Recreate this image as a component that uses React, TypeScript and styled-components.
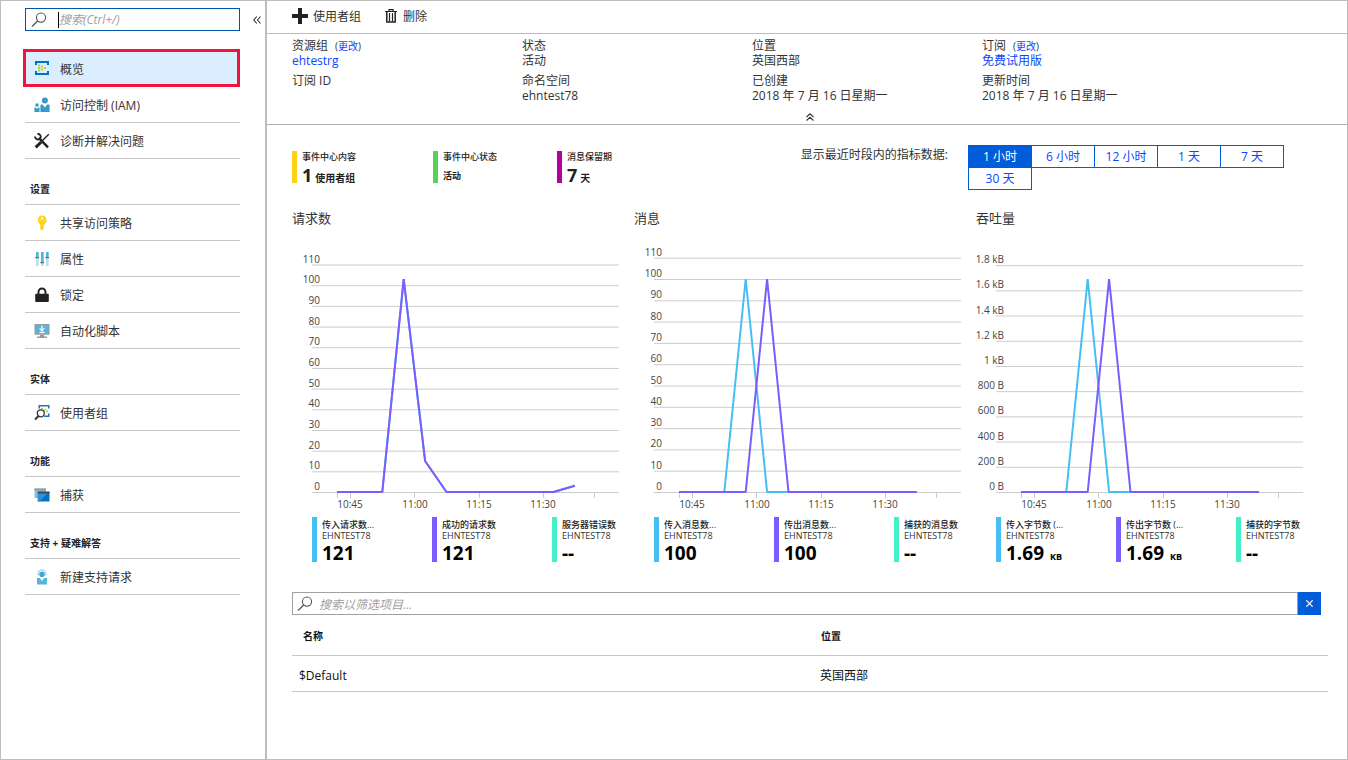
import React, { useState } from "react";
import styled, { createGlobalStyle, css } from "styled-components";

const GlobalStyle = createGlobalStyle`
  *, *::before, *::after { box-sizing: border-box; }
  body {
    margin: 0;
    background: #fff;
    color: #333;
    font: 12px/15px "Open Sans", "Noto Sans CJK SC", sans-serif;
  }
  button, input { font: inherit; color: inherit; }
  button { cursor: pointer; border: 0; padding: 0; background: none; }
  svg { display: block; flex: none; }
`;

const LINK = "#0a46ff";
const ACCENT = "#015cda";
const SKY = "#47bdf5";
const VIOLET = "#7b5cff";
const MINT = "#43f0c8";

/* ---------- page frame ---------- */

const Frame = styled.div`
  display: flex;
  min-height: 100vh;
  border: 1px solid #bdbdbd;
`;

const Sidebar = styled.aside`
  flex: none;
  width: 266px;
  border-right: 2px solid #bdbdbd;
  padding: 7px 0 24px 24px;
`;

const Main = styled.main`
  flex: 1;
  min-width: 0;
`;

/* ---------- sidebar ---------- */

const SearchRow = styled.div`
  display: flex;
  height: 23px;
`;

const SearchBox = styled.label`
  flex: 1;
  min-width: 0;
  display: flex;
  align-items: center;
  padding-left: 5px;
  border: 1px solid #0055aa;
`;

const Caret = styled.span`
  width: 1px;
  height: 16px;
  margin-left: 11px;
  background: #000;
`;

const TextInput = styled.input`
  flex: 1;
  min-width: 0;
  height: 21px;
  padding: 0;
  border: 0;
  outline: 0;
  background: transparent;
  &::placeholder {
    color: #a0a0a0;
    font-style: italic;
    opacity: 1;
  }
`;

const CollapseButton = styled.button`
  width: 25px;
  display: grid;
  place-items: center;
  padding-left: 8px;
`;

const Nav = styled.nav`
  margin: 18px 25px 0 0;
`;

const NavList = styled.ul`
  list-style: none;
  margin: 0;
  padding: 0;
`;

const NavHeading = styled.h2`
  margin: 0;
  height: 46px;
  padding: 15px 0 0 5px;
  border-bottom: 1px solid #c8c8c8;
  color: #222;
  font-size: 10px;
  line-height: 30px;
  font-weight: 700;
`;

const NavLink = styled.a<{ $active?: boolean }>`
  display: flex;
  align-items: center;
  gap: 10px;
  height: 36px;
  padding: 0 0 0 9px;
  border-bottom: 1px solid #c8c8c8;
  color: #333;
  text-decoration: none;
  span { padding-top: 2px; }
  ${(p) =>
    p.$active &&
    css`
      height: 38px;
      margin-left: -2px;
      padding-left: 8px;
      border: 3px solid #f0143c;
      background: #dbeeff;
    `}
`;

/* ---------- toolbar and essentials ---------- */

const Toolbar = styled.div`
  display: flex;
  align-items: center;
  gap: 24px;
  height: 33px;
  padding: 0 19px 3px 25px;
  border-bottom: 1px solid #bdbdbd;
`;

const Command = styled.button<{ $gap: number }>`
  display: flex;
  align-items: center;
  gap: ${(p) => p.$gap}px;
  span { padding-top: 2px; }
`;

const Essentials = styled.section`
  height: 91px;
  padding: 4px 19px 0 25px;
  border-bottom: 1px solid #b0b0b0;
`;

const Facts = styled.dl`
  display: grid;
  grid-template-columns: repeat(4, 230px);
  row-gap: 5px;
  margin: 0;
`;

const Fact = styled.div`
  height: 30px;
  dt, dd { margin: 0; height: 15px; white-space: nowrap; }
`;

const Link = styled.a`
  color: ${LINK};
  text-decoration: none;
`;

const Change = styled.span`
  margin-left: 7px;
  font-size: 10px;
`;

const FoldButton = styled.button`
  display: block;
  margin: 0 auto;
  padding: 10px 6px 3px;
`;

/* ---------- metrics ---------- */

const Content = styled.div`
  padding: 20px 19px 24px 25px;
`;

const Overview = styled.div`
  display: flex;
  justify-content: space-between;
  padding-right: 44px;
`;

const Tiles = styled.div`
  display: grid;
  grid-template-columns: 141px 124px auto;
  margin-top: 6px;
`;

const Tile = styled.div<{ $color: string }>`
  height: 32px;
  padding-left: 5px;
  border-left: 5px solid ${(p) => p.$color};
  color: #222;
  white-space: nowrap;
`;

const TileTitle = styled.div`
  font-size: 9px;
  line-height: 12px;
  font-weight: 500;
`;

const TileValue = styled.div`
  display: flex;
  align-items: baseline;
  gap: 3px;
  font-size: 10px;
  line-height: 24px;
  font-weight: 700;
  strong { font-size: 18px; font-weight: 700; }
`;

const TileState = styled.div`
  font-size: 9px;
  line-height: 26px;
  font-weight: 700;
`;

const RangePicker = styled.div`
  display: flex;
  gap: 20px;
  line-height: 20px;
`;

const Ranges = styled.div`
  display: flex;
  flex-wrap: wrap;
  width: 316px;
`;

const RangeButton = styled.button<{ $on: boolean }>`
  width: 64px;
  height: 23px;
  margin: 0 -1px -1px 0;
  border: 1px solid ${ACCENT};
  background: ${(p) => (p.$on ? ACCENT : "#fff")};
  color: ${(p) => (p.$on ? "#fff" : LINK)};
`;

const Charts = styled.div`
  display: grid;
  grid-template-columns: repeat(3, 1fr);
  margin-top: 19px;
  padding-right: 10px;
`;

const ChartTitle = styled.h3`
  margin: 0 0 12px;
  font-size: 13px;
  line-height: 20px;
  font-weight: 400;
`;

const Plot = styled.svg`
  width: 100%;
  height: auto;
  text {
    font-size: 10px;
    fill: #444;
  }
`;

const Legend = styled.div`
  display: grid;
  grid-template-columns: 120px 120px 1fr;
  margin-top: 5px;
  padding-left: 20px;
`;

const LegendItem = styled.div<{ $color: string }>`
  height: 45px;
  padding: 2px 0 0 5px;
  border-left: 5px solid ${(p) => p.$color};
  font-size: 9px;
  line-height: 11px;
  white-space: nowrap;
`;

const LegendName = styled.div`
  color: #222;
  font-weight: 500;
`;

const LegendValue = styled.div`
  display: flex;
  align-items: baseline;
  gap: 6px;
  color: #000;
  font-weight: 700;
  line-height: 25px;
  strong { font-size: 19px; font-weight: 700; }
`;

/* ---------- consumer group table ---------- */

const FilterRow = styled.div`
  display: flex;
  height: 23px;
  margin: 30px 7px 0 0;
`;

const FilterBox = styled.label`
  flex: 1;
  display: flex;
  align-items: center;
  gap: 6px;
  padding-left: 4px;
  border: 1px solid #a0a0a0;
  input { padding-top: 2px; }
`;

const ClearButton = styled.button`
  width: 23px;
  display: grid;
  place-items: center;
  background: ${ACCENT};
`;

const Table = styled.table`
  width: 100%;
  table-layout: fixed;
  border-collapse: separate;
  border-spacing: 0;
  th, td {
    padding: 2px 0 0 10px;
    border-bottom: 1px solid #c8c8c8;
    text-align: left;
    color: #111;
  }
  th { height: 41px; padding-left: 11px; font-size: 10px; font-weight: 700; }
  td { height: 36px; padding-top: 3px; }
  td:first-child { padding-left: 7px; }
`;

/* ---------- icons ---------- */

const SearchIcon = () => (
  <svg width="16" height="16" viewBox="0 0 16 16" fill="none" stroke="#555" strokeWidth="1.1">
    <circle cx="10" cy="5.600" r="4.600" />
    <path d="M6.700 9 1 14.600" strokeWidth="1.400" />
  </svg>
);

const HubIcon = () => (
  <svg width="16" height="16" viewBox="0 0 16 16">
    <path fill="#0072c6" d="M1 1h14v4h-2V3H3v2H1zM1 15h14v-4h-2v2H3v-2H1z" />
    <path fill="#b8d432" d="M4 4.400h2v2H4zM4 7h2v2H4zM4 9.600h2v2H4zM6.800 5.600h2v2h-2zM6.800 8.400h2v2h-2zM9.800 7h2.200v2H9.800z" />
  </svg>
);

const PeopleIcon = () => (
  <svg width="16" height="16" viewBox="0 0 16 16" fill="#3999c6">
    <circle cx="10.9" cy="3.6" r="3" />
    <path d="M6.4 15V8.4Q6.4 7.4 7.4 7.4H8.6L10.9 10.6 13.2 7.4H14.6Q15.6 7.4 15.6 8.4V15z" />
    <circle cx="3" cy="8" r="1.8" />
    <path d="M.4 15v-4q0-.6.6-.6h.8L3 12l1.200-1.600h.8q.6 0 .6.6v4z" />
  </svg>
);

const ToolsIcon = () => (
  <svg width="16" height="16" viewBox="0 0 16 16" fill="none" stroke="#222">
    <path d="M5 5.200 14 14.400" strokeWidth="2.400" />
    <path d="M3.400.9A2.800 2.800 0 1 1 1.100 3.600" strokeWidth="1.900" />
    <path d="M14.800 1.200 8.500 7.500" strokeWidth="1.400" />
    <path d="M7.200 9 1.700 14.300" strokeWidth="3" />
  </svg>
);

const KeyIcon = () => (
  <svg width="16" height="16" viewBox="0 0 16 16">
    <path
      fill="#fcd116"
      fillRule="evenodd"
      d="M8 .6a4.600 4.600 0 0 1 2.200 8.600v1l-1 .9 1 1-1 1 .3.900L8 15.600l-1.700-1.700V9.200A4.600 4.600 0 0 1 8 .6zM8 1.900a1.100 1.100 0 1 0 0 2.200 1.100 1.100 0 0 0 0-2.200z"
    />
    <path fill="#fff" opacity=".7" d="M4.800 4.600h6.400v.7H4.800z" />
  </svg>
);

const SlidersIcon = () => (
  <svg width="16" height="16" viewBox="0 0 16 16">
    <path fill="#b5e0f0" d="M2 1h2.600v14H2zM7 1h2.600v14H7zM12 1h2.600v14H12z" />
    <path fill="#59b4d9" d="M2 1h2.600v5H2zM7 1h2.600v10H7zM12 1h2.600v5H12z" />
    <path fill="#5f6b73" d="M1.300 6h3.800v1.200H1.300zM6.300 11h3.800v1.200H6.300zM11.300 6h3.800v1.200h-3.800z" />
  </svg>
);

const LockIcon = () => (
  <svg width="16" height="16" viewBox="0 0 16 16">
    <path d="M4.500 7.500V5a3.500 3.500 0 0 1 7 0v2.500" fill="none" stroke="#222" strokeWidth="1.900" />
    <rect x="1.200" y="6.800" width="13.600" height="8.200" rx="1" fill="#222" />
  </svg>
);

const ScriptIcon = () => (
  <svg width="16" height="16" viewBox="0 0 16 16">
    <path fill="#999" d="M.5 1h15v10.700H.5z" />
    <path fill="#59b4d9" d="M1.300 2h13.400v9H1.300z" />
    <path fill="#999" d="M6 11.700h4v1.800h3V15H3v-1.500h3z" />
    <path d="M8 2.500v5M5.600 5.400 8 7.700l2.400-2.300M5.500 9.300h5" fill="none" stroke="#fff" strokeWidth="1.200" />
  </svg>
);

const ConsumerIcon = () => (
  <svg width="16" height="16" viewBox="0 0 16 16">
    <path fill="#1478c8" d="M4.500 0h11v3.500H14V1.600H6v2H4.500zM10 10.400h4V8.500h1.500V12H10z" />
    <path fill="#b8d432" d="M7 2.700h2v1.800H7zM9.800 4h2v1.800h-2zM12 5.400h2v1.800h-2z" />
    <circle cx="6.800" cy="8.300" r="3.500" fill="#fff" stroke="#333" strokeWidth="1.300" />
    <path d="M4.500 11 1 14.600" stroke="#333" strokeWidth="2" />
  </svg>
);

const CaptureIcon = () => (
  <svg width="16" height="16" viewBox="0 0 16 16">
    <path fill="#79c6e4" d="M.5 1.500h11.500v9.500H.5z" />
    <path fill="#999" d="M.5 1.500h11.500v2H.5z" />
    <path fill="#0072c6" d="M3.800 4.700h11.700V14.500H3.800z" />
    <path fill="#2f8fd8" d="M3.800 6.500h9.500L5.500 14.500H3.800z" />
    <path fill="#444" d="M3.800 4.700h11.700v1.500H3.800z" />
  </svg>
);

const SupportIcon = () => (
  <svg width="16" height="16" viewBox="0 0 16 16">
    <path d="M4 6.500V4.800a4 4 0 0 1 8 0v1.700" fill="none" stroke="#a5d8ea" strokeWidth="1.300" />
    <circle cx="8" cy="5.200" r="2.800" fill="#3fa9d6" />
    <path fill="#59b4d9" d="M3 15.500V9h2.800L8 12l2.200-3H13v6.500z" />
  </svg>
);

const PlusIcon = () => (
  <svg width="16" height="16" viewBox="0 0 16 16" fill="#222">
    <path d="M6 0h4v6h6v4h-6v6H6v-6H0V6h6z" />
  </svg>
);

const TrashIcon = () => (
  <svg width="12" height="14" viewBox="0 0 12 14" fill="none" stroke="#222">
    <path d="M0 2.500h12M4 2V.6h4V2" strokeWidth="1.200" />
    <path d="M1.800 3v10h8.400V3" strokeWidth="1.500" />
    <path d="M4.500 4v8.500M7.500 4v8.500" strokeWidth="1.200" />
  </svg>
);

const Chevrons = ({ up }: { up?: boolean }) => (
  <svg width="8" height="8" viewBox="0 0 8 8" fill="none" stroke="#333" strokeWidth="1.100">
    <path d={up ? "M.5 4 4 .8 7.500 4M.5 7.500 4 4.300 7.500 7.500" : "M3.800.5.8 4l3 3.500M7.500.5l-3 3.500 3 3.500"} />
  </svg>
);

const CloseIcon = () => (
  <svg width="7" height="7" viewBox="0 0 7 7" stroke="#fff" strokeWidth="1.200">
    <path d="M.3.3l6.400 6.400M6.700.3.3 6.700" />
  </svg>
);

/* ---------- data ---------- */

type NavItem = { label: string; icon: React.ReactNode; active?: boolean };

const NAV: { heading?: string; items: NavItem[] }[] = [
  {
    items: [
      { label: "概览", icon: <HubIcon />, active: true },
      { label: "访问控制 (IAM)", icon: <PeopleIcon /> },
      { label: "诊断并解决问题", icon: <ToolsIcon /> },
    ],
  },
  {
    heading: "设置",
    items: [
      { label: "共享访问策略", icon: <KeyIcon /> },
      { label: "属性", icon: <SlidersIcon /> },
      { label: "锁定", icon: <LockIcon /> },
      { label: "自动化脚本", icon: <ScriptIcon /> },
    ],
  },
  { heading: "实体", items: [{ label: "使用者组", icon: <ConsumerIcon /> }] },
  { heading: "功能", items: [{ label: "捕获", icon: <CaptureIcon /> }] },
  { heading: "支持 + 疑难解答", items: [{ label: "新建支持请求", icon: <SupportIcon /> }] },
];

const FACTS: { term: string; value?: string; change?: boolean; link?: boolean }[] = [
  { term: "资源组", value: "ehtestrg", change: true, link: true },
  { term: "状态", value: "活动" },
  { term: "位置", value: "英国西部" },
  { term: "订阅", value: "免费试用版", change: true, link: true },
  { term: "订阅 ID" },
  { term: "命名空间", value: "ehntest78" },
  { term: "已创建", value: "2018 年 7 月 16 日星期一" },
  { term: "更新时间", value: "2018 年 7 月 16 日星期一" },
];

const RANGES = ["1 小时", "6 小时", "12 小时", "1 天", "7 天", "30 天"];

type Series = { color: string; values: number[] };
type ChartData = {
  title: string;
  peak: number;
  ticks: number[];
  format: (v: number) => string;
  series: Series[];
  legend: { name: string; value: string; unit?: string }[];
};

const tens = Array.from({ length: 12 }, (_, i) => i * 10);
const spike = (at: number, peak: number) => Array.from({ length: 12 }, (_, i) => (i === at ? peak : 0));
const requests = [0, 0, 0, 103, 15, 0, 0, 0, 0, 0, 0, 3];

const CHARTS: ChartData[] = [
  {
    title: "请求数",
    peak: 103,
    ticks: tens,
    format: String,
    series: [
      { color: SKY, values: requests },
      { color: VIOLET, values: requests },
    ],
    legend: [
      { name: "传入请求数...", value: "121" },
      { name: "成功的请求数", value: "121" },
      { name: "服务器错误数", value: "--" },
    ],
  },
  {
    title: "消息",
    peak: 100,
    ticks: tens,
    format: String,
    series: [
      { color: SKY, values: spike(3, 100) },
      { color: VIOLET, values: spike(4, 100) },
    ],
    legend: [
      { name: "传入消息数...", value: "100" },
      { name: "传出消息数...", value: "100" },
      { name: "捕获的消息数", value: "--" },
    ],
  },
  {
    title: "吞吐量",
    peak: 1690,
    ticks: Array.from({ length: 10 }, (_, i) => i * 200),
    format: (v) => (v >= 1000 ? `${v / 1000} kB` : `${v} B`),
    series: [
      { color: SKY, values: spike(3, 1690) },
      { color: VIOLET, values: spike(4, 1690) },
    ],
    legend: [
      { name: "传入字节数 (...", value: "1.69", unit: "KB" },
      { name: "传出字节数 (...", value: "1.69", unit: "KB" },
      { name: "捕获的字节数", value: "--" },
    ],
  },
];

const TIMES = [
  { x: 58, label: "10:45" },
  { x: 123, label: "11:00" },
  { x: 187, label: "11:15" },
  { x: 251, label: "11:30" },
];

/* ---------- chart ---------- */

const BASE = 252;
const PEAK_HEIGHT = 213;
const STEP = 21.4;

function Chart({ data }: { data: ChartData }) {
  const y = (v: number) => BASE - (v / data.peak) * PEAK_HEIGHT;
  const x = (i: number) => Math.max(45, 47.5 + i * STEP);
  return (
    <section>
      <ChartTitle>{data.title}</ChartTitle>
      <Plot viewBox="0 0 342 272" role="img" aria-label={data.title}>
        {data.ticks.map((v) => (
          <g key={v}>
            <path d={`M20 ${y(v) + 0.5}H327`} stroke="#ccc" />
            <text x="28" y={y(v) - 2} textAnchor="end">
              {data.format(v)}
            </text>
          </g>
        ))}
        {[45, 58, 122, 187, 251, 302].map((t) => (
          <path key={t} d={`M${t + 0.5} 253v5`} stroke="#ccc" />
        ))}
        {TIMES.map((t) => (
          <text key={t.label} x={t.x} y="268" textAnchor="middle">
            {t.label}
          </text>
        ))}
        {data.series.map((s) => (
          <polyline
            key={s.color}
            fill="none"
            stroke={s.color}
            strokeWidth="2"
            strokeLinejoin="bevel"
            points={`45,${BASE} ` + s.values.map((v, i) => `${x(i)},${y(v)}`).join(" ")}
          />
        ))}
      </Plot>
      <Legend>
        {data.legend.map((item, i) => (
          <LegendItem key={item.name} $color={[SKY, VIOLET, MINT][i]}>
            <LegendName>{item.name}</LegendName>
            <div>EHNTEST78</div>
            <LegendValue>
              <strong>{item.value}</strong>
              {item.unit}
            </LegendValue>
          </LegendItem>
        ))}
      </Legend>
    </section>
  );
}

/* ---------- page ---------- */

export default function App() {
  const [range, setRange] = useState(RANGES[0]);
  return (
    <Frame lang="zh-CN">
      <GlobalStyle />
      <Sidebar>
        <SearchRow>
          <SearchBox>
            <SearchIcon />
            <Caret />
            <TextInput aria-label="搜索" placeholder="搜索(Ctrl+/)" />
          </SearchBox>
          <CollapseButton aria-label="折叠">
            <Chevrons />
          </CollapseButton>
        </SearchRow>
        <Nav>
          {NAV.map((group, i) => (
            <React.Fragment key={i}>
              {group.heading && <NavHeading>{group.heading}</NavHeading>}
              <NavList>
                {group.items.map((item) => (
                  <li key={item.label}>
                    <NavLink href="#" $active={item.active}>
                      {item.icon}
                      <span>{item.label}</span>
                    </NavLink>
                  </li>
                ))}
              </NavList>
            </React.Fragment>
          ))}
        </Nav>
      </Sidebar>
      <Main>
        <Toolbar>
          <Command $gap={5}>
            <PlusIcon />
            <span>使用者组</span>
          </Command>
          <Command $gap={6}>
            <TrashIcon />
            <span>删除</span>
          </Command>
        </Toolbar>
        <Essentials>
          <Facts>
            {FACTS.map((f) => (
              <Fact key={f.term}>
                <dt>
                  {f.term}
                  {f.change && (
                    <Change>
                      (<Link href="#">更改</Link>)
                    </Change>
                  )}
                </dt>
                <dd>{f.link ? <Link href="#">{f.value}</Link> : f.value}</dd>
              </Fact>
            ))}
          </Facts>
          <FoldButton aria-label="收起">
            <Chevrons up />
          </FoldButton>
        </Essentials>
        <Content>
          <Overview>
            <Tiles>
              <Tile $color="#fcd116">
                <TileTitle>事件中心内容</TileTitle>
                <TileValue>
                  <strong>1</strong>使用者组
                </TileValue>
              </Tile>
              <Tile $color="#57d257">
                <TileTitle>事件中心状态</TileTitle>
                <TileState>活动</TileState>
              </Tile>
              <Tile $color="#b4009e">
                <TileTitle>消息保留期</TileTitle>
                <TileValue>
                  <strong>7</strong>天
                </TileValue>
              </Tile>
            </Tiles>
            <RangePicker>
              <span>显示最近时段内的指标数据:</span>
              <Ranges>
                {RANGES.map((r) => (
                  <RangeButton key={r} $on={r === range} aria-pressed={r === range} onClick={() => setRange(r)}>
                    {r}
                  </RangeButton>
                ))}
              </Ranges>
            </RangePicker>
          </Overview>
          <Charts>
            {CHARTS.map((c) => (
              <Chart key={c.title} data={c} />
            ))}
          </Charts>
          <FilterRow>
            <FilterBox>
              <SearchIcon />
              <TextInput aria-label="筛选" placeholder="搜索以筛选项目..." />
            </FilterBox>
            <ClearButton aria-label="清除">
              <CloseIcon />
            </ClearButton>
          </FilterRow>
          <Table>
            <thead>
              <tr>
                <th scope="col">名称</th>
                <th scope="col">位置</th>
              </tr>
            </thead>
            <tbody>
              <tr>
                <td>$Default</td>
                <td>英国西部</td>
              </tr>
            </tbody>
          </Table>
        </Content>
      </Main>
    </Frame>
  );
}
